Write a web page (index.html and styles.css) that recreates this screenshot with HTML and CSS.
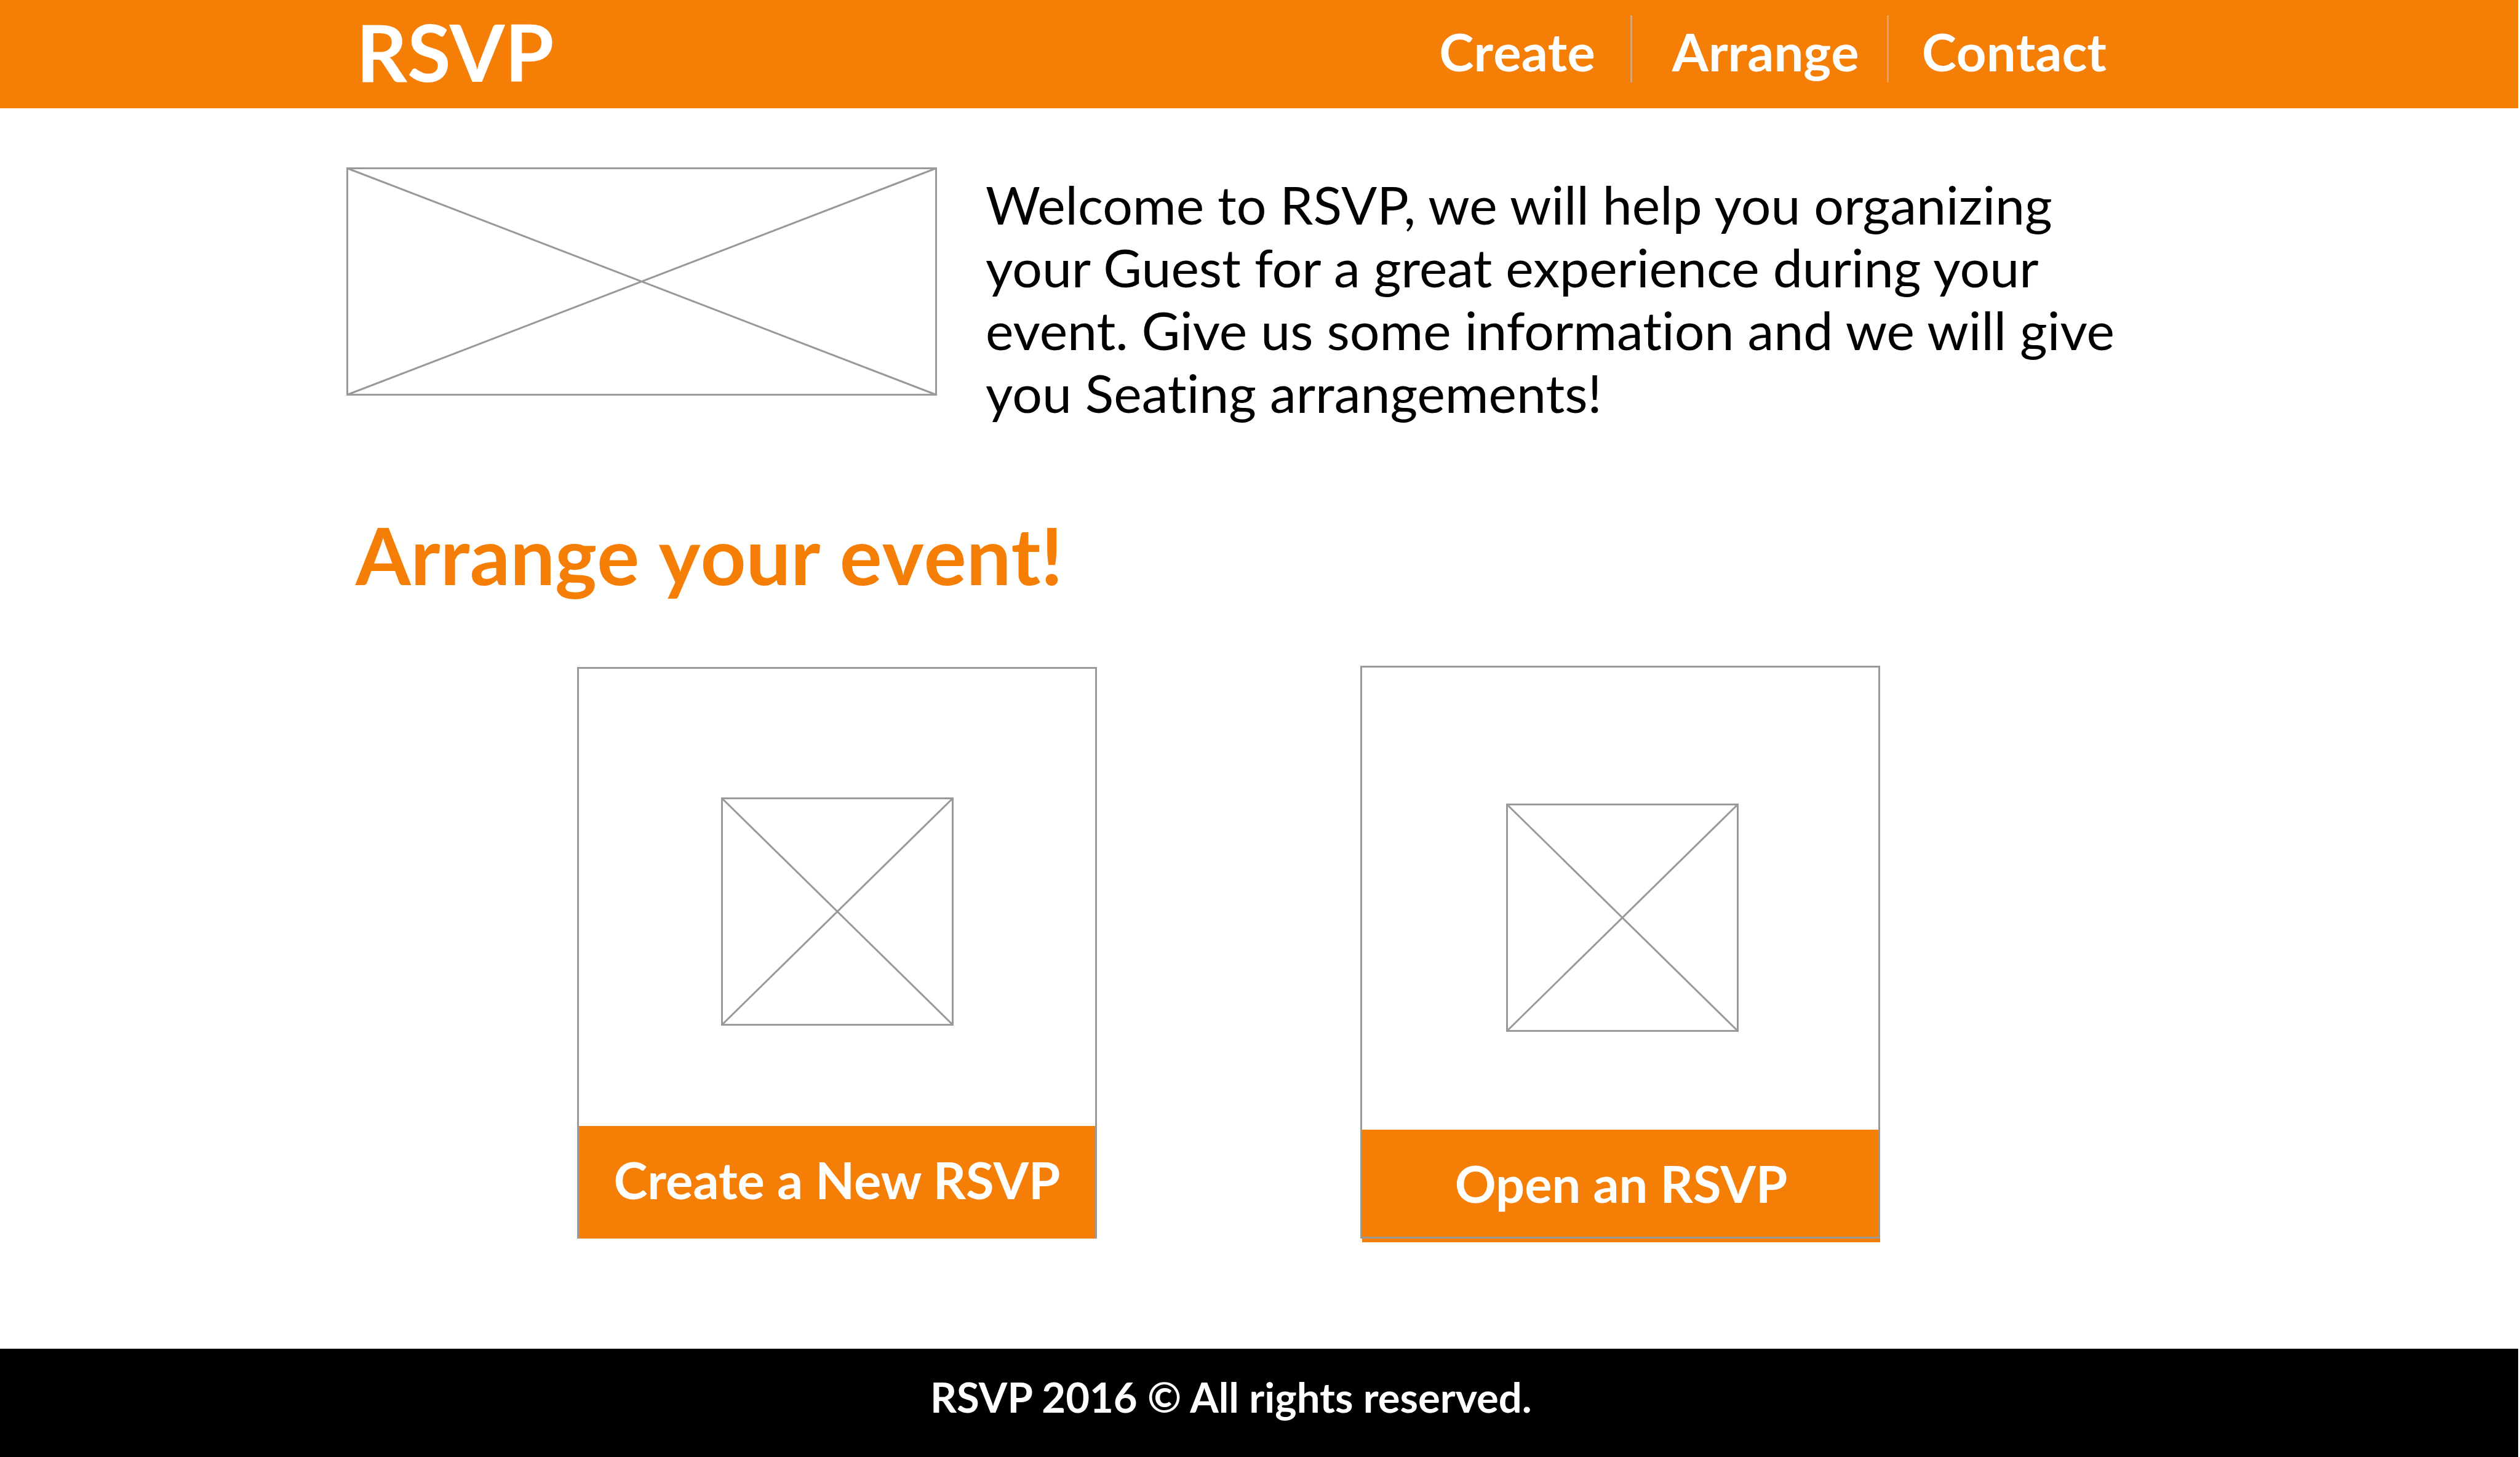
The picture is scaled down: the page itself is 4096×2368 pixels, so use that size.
FILE: index.html
```html
<!DOCTYPE html>
<html lang="en">
<head>
  <meta charset="utf-8">
  <title>RSVP</title>
  <link rel="stylesheet" href="styles.css">
</head>
<body>
  <header class="site-header">
    <a class="logo" href="#">RSVP</a>
    <nav>
      <ul class="nav">
        <li class="nav-item"><a href="#create">Create</a></li>
        <li class="nav-item"><a href="#arrange">Arrange</a></li>
        <li class="nav-item"><a href="#contact">Contact</a></li>
      </ul>
    </nav>
  </header>

  <main class="main">
    <section class="intro">
      <svg class="placeholder placeholder-wide" viewBox="0 0 960 371" preserveAspectRatio="none" role="img" aria-label="Banner">
        <path d="M1.5 1.5H958.5V369.5H1.5ZM1.5 1.5L958.5 369.5M958.5 1.5L1.5 369.5"/>
      </svg>
      <p class="intro-text">Welcome to RSVP, we will help you organizing your Guest for a great experience during your event. Give us some information and we will give you Seating arrangements!</p>
    </section>

    <h1 class="title">Arrange your event!</h1>

    <section class="cards">
      <article class="card card-create">
        <div class="card-body">
          <svg class="placeholder placeholder-small" viewBox="0 0 378 371" role="img" aria-label="New RSVP">
            <path d="M1.5 1.5H376.5V369.5H1.5ZM1.5 1.5L376.5 369.5M376.5 1.5L1.5 369.5"/>
          </svg>
        </div>
        <button class="card-button" type="button">Create a New RSVP</button>
      </article>
      <article class="card card-open">
        <div class="card-body">
          <svg class="placeholder placeholder-small" viewBox="0 0 378 371" role="img" aria-label="Open RSVP">
            <path d="M1.5 1.5H376.5V369.5H1.5ZM1.5 1.5L376.5 369.5M376.5 1.5L1.5 369.5"/>
          </svg>
        </div>
        <button class="card-button" type="button">Open an RSVP</button>
      </article>
    </section>
  </main>

  <footer class="site-footer">
    <p>RSVP 2016 © All rights reserved.</p>
  </footer>
</body>
</html>
```
FILE: styles.css
```css
:root {
  --orange: #f57e07;
  --line: #999999;
  --divider: #dfa370;
}

* {
  box-sizing: border-box;
}

body {
  margin: 0;
  min-height: 100vh;
  display: flex;
  flex-direction: column;
  background: #fff;
  color: #000;
  font-family: Lato, sans-serif;
  font-variant-ligatures: none;
}

h1, p, ul {
  margin: 0;
  padding: 0;
}

a {
  color: inherit;
  text-decoration: none;
}

.site-header {
  display: flex;
  justify-content: space-between;
  align-items: flex-start;
  height: 176px;
  margin-right: 3px;
  padding: 0 669px 0 579px;
  background: var(--orange);
  color: #fff;
  font-weight: 700;
}

.logo {
  font-size: 129px;
  line-height: 166px;
}

.nav {
  display: flex;
  margin-top: 25px;
  list-style: none;
  font-size: 85px;
  font-kerning: none;
  line-height: 101px;
}

.nav-item {
  padding: 8px 0 0 54px;
}

.nav-item + .nav-item {
  border-left: 3px solid var(--divider);
}

.nav-item:nth-child(1) {
  padding-right: 57px;
}

.nav-item:nth-child(2) {
  padding-left: 65px;
  padding-right: 45px;
}

.main {
  flex: 1;
  padding-top: 96px;
}

.intro {
  display: flex;
  align-items: flex-start;
  gap: 79px;
  padding: 0 640px 0 563px;
}

.placeholder {
  display: block;
  flex: none;
  fill: none;
  stroke: var(--line);
  stroke-width: 3px;
}

.placeholder-wide {
  width: 960px;
  height: 371px;
}

.placeholder-small {
  width: 378px;
  height: 371px;
}

.intro-text {
  flex: 1;
  padding-top: 9px;
  font-size: 86px;
  line-height: 102px;
}

.title {
  margin-top: 135px;
  padding-left: 578px;
  color: var(--orange);
  font-size: 129px;
  font-weight: 700;
  font-kerning: none;
  line-height: 155px;
}

.cards {
  display: flex;
  align-items: flex-end;
  gap: 428px;
  margin-top: 103px;
  padding: 0 1040px 0 938px;
}

.card {
  position: relative;
  flex: 1;
  display: flex;
  flex-direction: column;
  border: 3px solid var(--line);
  border-bottom: 0;
}

.card-body {
  display: flex;
  justify-content: center;
  padding: 209px 0 163px;
}

.card-open .card-body {
  padding: 221px 0 159px 6px;
}

.card-button {
  height: 183px;
  padding: 0 0 8px;
  border: 0;
  background: var(--orange);
  color: #fff;
  font: 700 83px/101px Lato, sans-serif;
}

/* The button hangs below the frame, whose lower edge runs across it. */
.card-open .card-button {
  margin: 0 -3px -6px 0;
}

.card-open::after {
  content: "";
  position: absolute;
  inset: 0 -3px 0 -3px;
  border: solid var(--line);
  border-width: 0 3px 3px;
  pointer-events: none;
}

.site-footer {
  height: 176px;
  margin-right: 3px;
  padding: 38px 0 0 1512px;
  background: #000;
  color: #fff;
  font-size: 67px;
  font-weight: 700;
  line-height: 81px;
}
```
